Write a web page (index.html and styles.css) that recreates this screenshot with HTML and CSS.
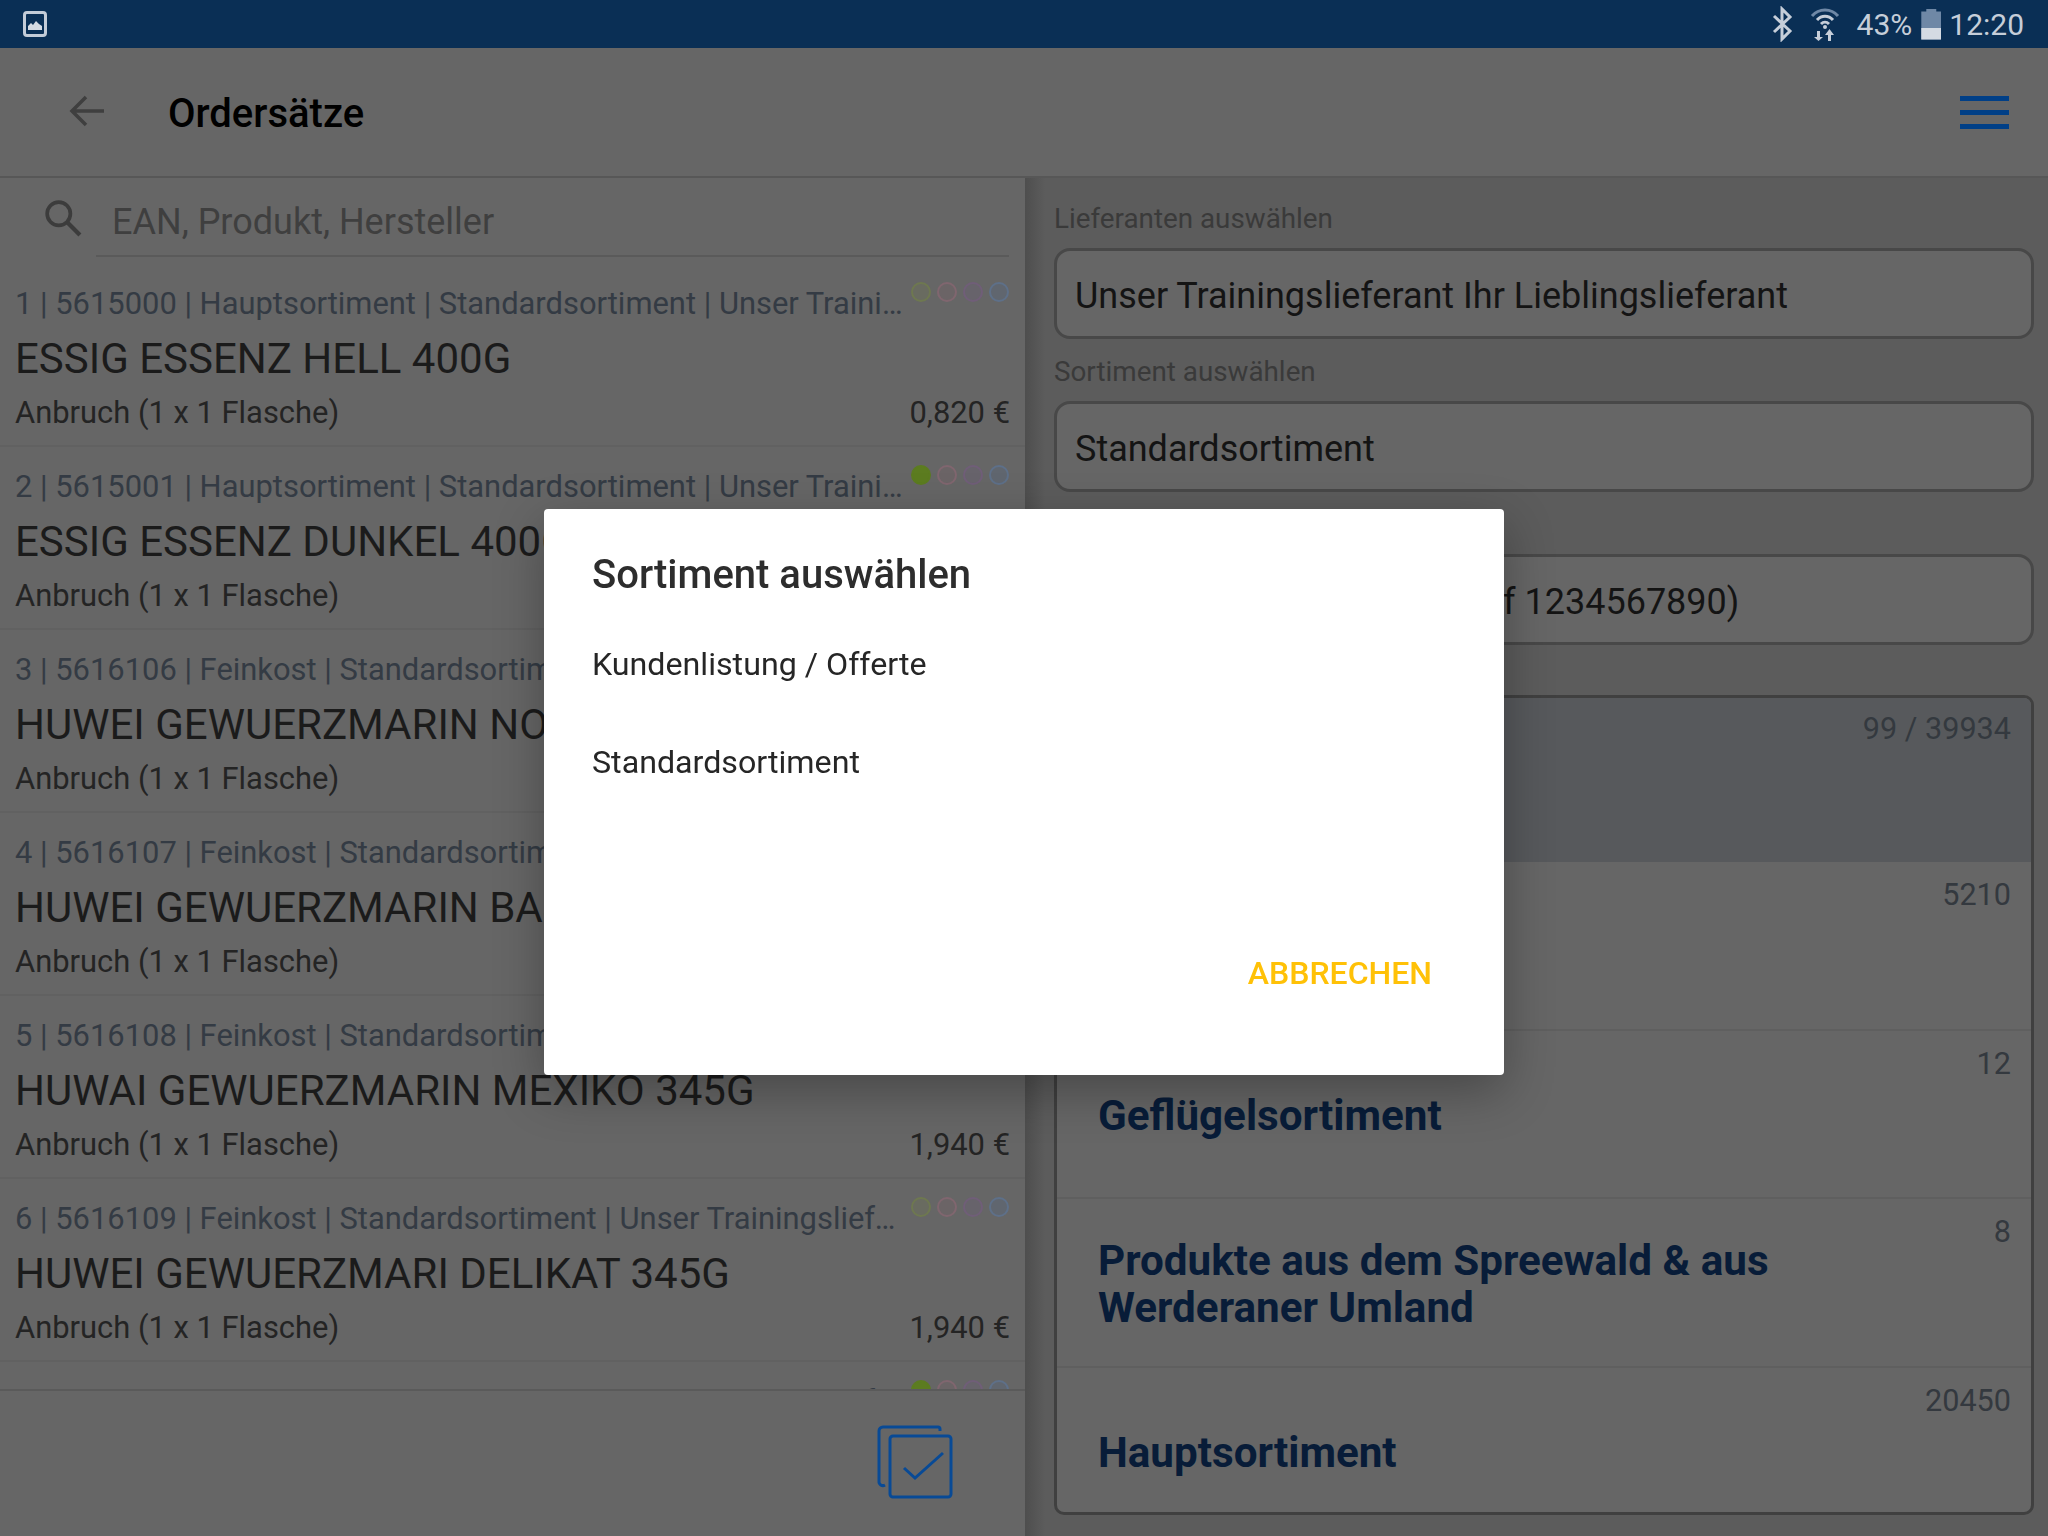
FILE: index.html
```html
<!DOCTYPE html>
<html lang="de">
<head>
    <meta charset="UTF-8">
    <title>Ordersätze</title>
    <link rel="stylesheet" href="styles.css">
</head>
<body>
    <div class="app">
        <div class="status-bar">
            <svg class="status-image" width="24" height="26" viewBox="0 0 24 26">
                <rect x="1.500" y="1.500" width="21" height="23" rx="2.500" fill="none" stroke="#c3ccd8" stroke-width="3"/>
                <path d="M5 19v-4l3-3 2 2 3-4 3 3 3 2v4z" fill="#d5dbe3"/>
            </svg>
            <div class="status-right">
                <svg class="status-bt" width="24" height="36" viewBox="0 0 24 36">
                    <path d="M4 10l16 15-8 8V3l8 8L4 26" fill="none" stroke="#c6ced9" stroke-width="3"/>
                </svg>
                <svg class="status-wifi" width="30" height="34" viewBox="0 0 30 34">
                    <path d="M2 9C9 1 21 1 28 9" fill="none" stroke="#6f88a6" stroke-width="3"/>
                    <path d="M7 13c4.500-5 11.500-5 16 0" fill="none" stroke="#c6ced9" stroke-width="3"/>
                    <path d="M11 17c2.500-2.500 5.500-2.500 8 0" fill="none" stroke="#c6ced9" stroke-width="3"/>
                    <circle cx="15" cy="20" r="2" fill="#c6ced9"/>
                    <path d="M7 24h3v6h3l-4.500 4L4 30h3z" fill="#c6ced9"/>
                    <path d="M18 34v-6h-3l4.500-6 4.500 6h-3v6z" fill="#c6ced9"/>
                </svg>
                <span class="status-text">43%</span>
                <div class="battery"><div class="battery-fill"></div></div>
                <span class="status-text">12:20</span>
            </div>
        </div>

        <div class="app-bar">
            <svg class="back-icon" width="36" height="32" viewBox="0 0 36 32">
                <path d="M17 2L3 16l14 14M3 16h32" fill="none" stroke="#3f3f3f" stroke-width="3.500"/>
            </svg>
            <div class="app-title">Ordersätze</div>
            <div class="menu-icon"><span></span><span></span><span></span></div>
        </div>

        <div class="main">
            <div class="left-panel">
                <div class="search-row">
                    <svg class="search-icon" width="38" height="38" viewBox="0 0 36 36">
                        <circle cx="14" cy="14" r="11" fill="none" stroke="#3c3c3c" stroke-width="3.500"/>
                        <path d="M22 22l12 12" stroke="#3c3c3c" stroke-width="4"/>
                    </svg>
                    <div class="search-text">EAN, Produkt, Hersteller</div>
                </div>
                <div class="product-list">
                    <div class="product">
                        <div class="product-top">
                            <div class="product-meta">1 | 5615000 | Hauptsortiment | Standardsortiment | Unser Trainingslieferant Ihr Lieblingslieferant</div>
                            <div class="dots"><i class="dot green"></i><i class="dot pink"></i><i class="dot purple"></i><i class="dot blue"></i></div>
                        </div>
                        <div class="product-name">ESSIG ESSENZ HELL 400G</div>
                        <div class="product-bottom"><span>Anbruch (1 x 1 Flasche)</span><span>0,820 €</span></div>
                    </div>
                    <div class="product">
                        <div class="product-top">
                            <div class="product-meta">2 | 5615001 | Hauptsortiment | Standardsortiment | Unser Trainingslieferant Ihr Lieblingslieferant</div>
                            <div class="dots"><i class="dot green on"></i><i class="dot pink"></i><i class="dot purple"></i><i class="dot blue"></i></div>
                        </div>
                        <div class="product-name">ESSIG ESSENZ DUNKEL 400G</div>
                        <div class="product-bottom"><span>Anbruch (1 x 1 Flasche)</span><span>0,820 €</span></div>
                    </div>
                    <div class="product">
                        <div class="product-top">
                            <div class="product-meta">3 | 5616106 | Feinkost | Standardsortiment | Unser Trainingslieferant Ihr Lieblingslieferant</div>
                            <div class="dots"><i class="dot green"></i><i class="dot pink"></i><i class="dot purple"></i><i class="dot blue"></i></div>
                        </div>
                        <div class="product-name">HUWEI GEWUERZMARIN NORMAL 345G</div>
                        <div class="product-bottom"><span>Anbruch (1 x 1 Flasche)</span><span>1,940 €</span></div>
                    </div>
                    <div class="product">
                        <div class="product-top">
                            <div class="product-meta">4 | 5616107 | Feinkost | Standardsortiment | Unser Trainingslieferant Ihr Lieblingslieferant</div>
                            <div class="dots"><i class="dot green"></i><i class="dot pink"></i><i class="dot purple"></i><i class="dot blue"></i></div>
                        </div>
                        <div class="product-name">HUWEI GEWUERZMARIN BASIS 345G</div>
                        <div class="product-bottom"><span>Anbruch (1 x 1 Flasche)</span><span>1,940 €</span></div>
                    </div>
                    <div class="product">
                        <div class="product-top">
                            <div class="product-meta">5 | 5616108 | Feinkost | Standardsortiment | Unser Trainingslieferant Ihr Lieblingslieferant</div>
                            <div class="dots"><i class="dot green"></i><i class="dot pink"></i><i class="dot purple"></i><i class="dot blue"></i></div>
                        </div>
                        <div class="product-name">HUWAI GEWUERZMARIN MEXIKO 345G</div>
                        <div class="product-bottom"><span>Anbruch (1 x 1 Flasche)</span><span>1,940 €</span></div>
                    </div>
                    <div class="product">
                        <div class="product-top">
                            <div class="product-meta">6 | 5616109 | Feinkost | Standardsortiment | Unser Trainingslieferant Ihr Lieblingslieferant</div>
                            <div class="dots"><i class="dot green"></i><i class="dot pink"></i><i class="dot purple"></i><i class="dot blue"></i></div>
                        </div>
                        <div class="product-name">HUWEI GEWUERZMARI DELIKAT 345G</div>
                        <div class="product-bottom"><span>Anbruch (1 x 1 Flasche)</span><span>1,940 €</span></div>
                    </div>
                    <div class="product">
                        <div class="product-top">
                            <div class="product-meta">7 | 5616110 | Feinkost | Standardsortiment | Unser Trainingslieferant Ihr Lieblingslieferant</div>
                            <div class="dots"><i class="dot green on"></i><i class="dot pink"></i><i class="dot purple"></i><i class="dot blue"></i></div>
                        </div>
                    </div>
                </div>
                <div class="bottom-bar">
                    <svg width="80" height="80" viewBox="0 0 80 80">
                        <path d="M63 9V7a2 2 0 0 0-2-2H6a4 4 0 0 0-4 4v50a4 4 0 0 0 6 4" fill="none" stroke="#084a96" stroke-width="3"/>
                        <rect x="13" y="14" width="61" height="61" rx="3" fill="none" stroke="#084a96" stroke-width="3"/>
                        <path d="M27 46l11 10 28-25" fill="none" stroke="#084a96" stroke-width="3"/>
                    </svg>
                </div>
            </div>

            <div class="right-panel">
                <div class="field-label">Lieferanten auswählen</div>
                <div class="field">Unser Trainingslieferant Ihr Lieblingslieferant</div>
                <div class="field-label">Sortiment auswählen</div>
                <div class="field">Standardsortiment</div>
                <div class="field-label">Kunde auswählen</div>
                <div class="field">Unser Kunde (Kundennr Ref 1234567890)</div>
                <div class="category-box">
                    <div class="category selected"><div class="category-name"></div><div class="category-count">99 / 39934</div></div>
                    <div class="category"><div class="category-name"></div><div class="category-count">5210</div></div>
                    <div class="category"><div class="category-name">Geflügelsortiment</div><div class="category-count">12</div></div>
                    <div class="category"><div class="category-name">Produkte aus dem Spreewald &amp; aus Werderaner Umland</div><div class="category-count">8</div></div>
                    <div class="category"><div class="category-name">Hauptsortiment</div><div class="category-count">20450</div></div>
                </div>
            </div>
        </div>
    </div>

    <div class="dialog-layer">
        <div class="dialog">
            <div class="dialog-title">Sortiment auswählen</div>
            <div class="dialog-item">Kundenlistung / Offerte</div>
            <div class="dialog-item">Standardsortiment</div>
            <div class="dialog-actions"><span class="dialog-button">ABBRECHEN</span></div>
        </div>
    </div>
</body>
</html>
```

FILE: styles.css
```css
* {
    box-sizing: border-box;
}
body {
    margin: 0;
    font-family: Roboto, "Liberation Sans", sans-serif;
    background-color: #666;
}
.app {
    width: 2048px;
    height: 1536px;
    display: flex;
    flex-direction: column;
    overflow: hidden;
}

/* status bar */
.status-bar {
    height: 48px;
    flex: none;
    background-color: #0a2f55;
    display: flex;
    align-items: center;
    justify-content: space-between;
    padding: 0 24px 0 23px;
}
.status-right {
    display: flex;
    align-items: center;
}
.status-bt {
    margin-right: 16px;
}
.status-wifi {
    margin-right: 17px;
}
.status-text {
    font-size: 30px;
    color: #c6ced9;
}
.battery {
    width: 20px;
    height: 31px;
    margin: 0 8px 0 9px;
    background-color: #6f88a6;
    display: flex;
    align-items: flex-end;
    clip-path: polygon(25% 0, 75% 0, 75% 10%, 100% 10%, 100% 100%, 0 100%, 0 10%, 25% 10%);
}
.battery-fill {
    width: 100%;
    height: 12px;
    background-color: #d5dbe3;
}

/* app bar */
.app-bar {
    height: 130px;
    flex: none;
    display: flex;
    align-items: center;
    padding: 0 39px 0 69px;
    border-bottom: 2px solid #575757;
}
.back-icon {
    margin-bottom: 2px;
}
.app-title {
    flex: 1;
    margin-left: 63px;
    padding-top: 3px;
    font-size: 40px;
    font-weight: 500;
    color: #000;
}
.menu-icon {
    width: 49px;
    height: 33px;
    display: flex;
    flex-direction: column;
    justify-content: space-between;
}
.menu-icon span {
    height: 5px;
    background-color: #003f87;
}

.main {
    flex: 1;
    display: flex;
    min-height: 0;
}

/* left panel */
.left-panel {
    width: 1025px;
    flex: none;
    display: flex;
    flex-direction: column;
}
.search-row {
    height: 79px;
    flex: none;
    margin: 0 16px 7px 44px;
    display: flex;
    align-items: center;
}
.search-icon {
    flex: none;
}
.search-text {
    flex: 1;
    align-self: stretch;
    margin-left: 14px;
    border-bottom: 2px solid #5a5a5a;
    padding-left: 16px;
    font-size: 36px;
    line-height: 88px;
    color: #3f3f3f;
}
.product-list {
    flex: 1;
    min-height: 0;
    overflow: hidden;
}
.product {
    height: 183px;
    padding: 18px 15px 0 15px;
    border-bottom: 2px solid #616161;
}
.product-top {
    display: flex;
    height: 42px;
}
.product-meta {
    flex: 1;
    min-width: 0;
    padding-top: 3px;
    font-size: 30.900px;
    line-height: 38px;
    color: #343b44;
    white-space: nowrap;
    overflow: hidden;
    text-overflow: ellipsis;
}
.dots {
    flex: none;
    display: flex;
    gap: 6px;
    margin: 0 1px 0 1px;
}
.dot {
    width: 20px;
    height: 20px;
    border-radius: 50%;
    border: 2px solid #777;
}
.dot.green {
    border-color: #6e7850;
    background-color: #696b60;
}
.dot.green.on {
    background-color: #5c7c20;
    border-color: #5c7c20;
}
.dot.pink {
    border-color: #80666f;
    background-color: #6b6466;
}
.dot.purple {
    border-color: #705e78;
    background-color: #67636b;
}
.dot.blue {
    border-color: #5e7089;
    background-color: #60666f;
}
.product-name {
    font-size: 42px;
    line-height: 52px;
    margin-top: 9px;
    color: #1b1b1b;
    white-space: nowrap;
}
.product-bottom {
    display: flex;
    justify-content: space-between;
    margin-top: 5px;
    font-size: 30.900px;
    line-height: 46px;
    color: #242424;
}
.bottom-bar {
    height: 147px;
    flex: none;
    background-color: #666;
    border-top: 2px solid #5a5a5a;
    padding: 31px 68px 0 0;
    display: flex;
    justify-content: flex-end;
    align-items: flex-start;
}

/* right panel */
.right-panel {
    flex: 1;
    padding: 21px 14px 21px 29px;
    background: linear-gradient(90deg, #4e4e4e, #5c5c5c 20px);
    display: flex;
    flex-direction: column;
}
.field-label {
    height: 49px;
    font-size: 27.800px;
    line-height: 40px;
    color: #3a3a3a;
}
.field {
    height: 91px;
    flex: none;
    margin-bottom: 13px;
    padding: 0 18px;
    background-color: #666;
    border: 3px solid #484848;
    border-radius: 16px;
    font-size: 36px;
    line-height: 91px;
    color: #141414;
    white-space: nowrap;
    overflow: hidden;
}
.category-box {
    flex: 1;
    min-height: 0;
    margin-top: 37px;
    background-color: #666;
    border: 3px solid #404040;
    border-radius: 10px;
    overflow: hidden;
}
.category {
    height: 168.500px;
    padding: 0 20px 0 41px;
    display: flex;
    align-items: center;
    border-bottom: 2px solid #5f5f5f;
}
.category.selected {
    height: 164px;
    background-color: #57595c;
    border-bottom: none;
}
.category.selected .category-count {
    padding-top: 11px;
}
.category-name {
    flex: 1;
    padding: 3px 100px 0 0;
    font-size: 42.200px;
    line-height: 47px;
    font-weight: 700;
    color: #081c38;
}
.category-count {
    align-self: flex-start;
    padding-top: 13px;
    font-size: 30.600px;
    line-height: 40px;
    color: #34393f;
}

/* dialog */
.dialog-layer {
    position: fixed;
    inset: 48px 0 0 0;
    display: flex;
    align-items: center;
    justify-content: center;
}
.dialog {
    width: 960px;
    height: 566px;
    background-color: #fff;
    border-radius: 4px;
    box-shadow: 0 16px 50px rgba(0, 0, 0, 0.3);
    padding: 42px 48px 0;
    display: flex;
    flex-direction: column;
}
.dialog-title {
    font-size: 40px;
    line-height: 48px;
    font-weight: 500;
    color: #2d2d2d;
    margin-bottom: 45px;
}
.dialog-item {
    font-size: 32.200px;
    line-height: 40px;
    margin-bottom: 58px;
    color: #262626;
}
.dialog-actions {
    display: flex;
    justify-content: flex-end;
    padding: 113px 24px 0 0;
}
.dialog-button {
    font-size: 32px;
    line-height: 40px;
    font-weight: 500;
    color: #ffc107;
}
```
